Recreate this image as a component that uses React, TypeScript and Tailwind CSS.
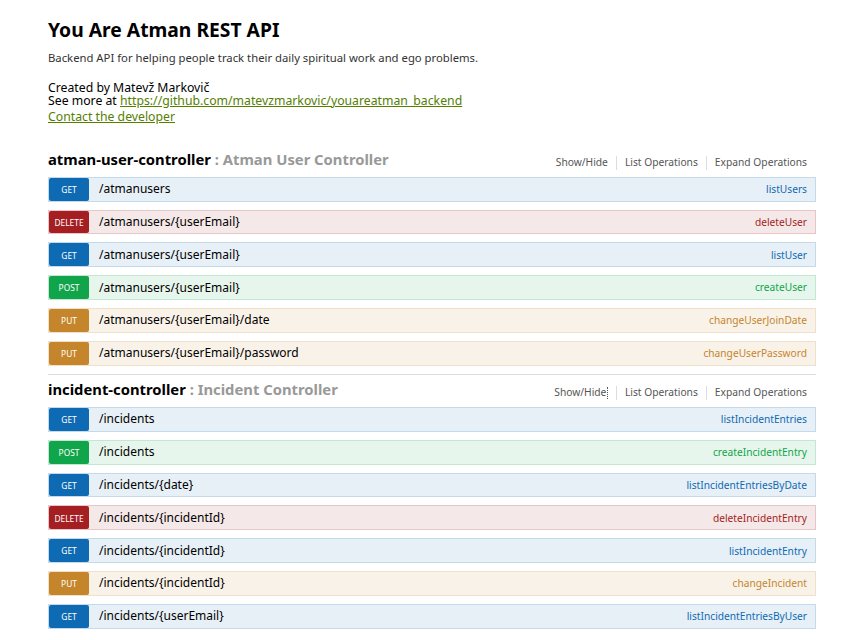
import React from "react";

type Method = "GET" | "POST" | "PUT" | "DELETE";

const styles: Record<Method, { row: string; badge: string; label: string }> = {
  GET: { row: "bg-[#e7f0f7] border-[#c3d9ec]", badge: "bg-[#0f6ab4]", label: "text-[#0f6ab4]" },
  POST: { row: "bg-[#e7f6ec] border-[#c3e8d1]", badge: "bg-[#10a54a]", label: "text-[#10a54a]" },
  PUT: { row: "bg-[#f9f2e9] border-[#f0e0ca]", badge: "bg-[#c5862b]", label: "text-[#c5862b]" },
  DELETE: { row: "bg-[#f5e8e8] border-[#e8c6c7]", badge: "bg-[#a41e22]", label: "text-[#a41e22]" },
};

type Op = { m: Method; path: string; name: string };

const userOps: Op[] = [
  { m: "GET", path: "/atmanusers", name: "listUsers" },
  { m: "DELETE", path: "/atmanusers/{userEmail}", name: "deleteUser" },
  { m: "GET", path: "/atmanusers/{userEmail}", name: "listUser" },
  { m: "POST", path: "/atmanusers/{userEmail}", name: "createUser" },
  { m: "PUT", path: "/atmanusers/{userEmail}/date", name: "changeUserJoinDate" },
  { m: "PUT", path: "/atmanusers/{userEmail}/password", name: "changeUserPassword" },
];

const incidentOps: Op[] = [
  { m: "GET", path: "/incidents", name: "listIncidentEntries" },
  { m: "POST", path: "/incidents", name: "createIncidentEntry" },
  { m: "GET", path: "/incidents/{date}", name: "listIncidentEntriesByDate" },
  { m: "DELETE", path: "/incidents/{incidentId}", name: "deleteIncidentEntry" },
  { m: "GET", path: "/incidents/{incidentId}", name: "listIncidentEntry" },
  { m: "PUT", path: "/incidents/{incidentId}", name: "changeIncident" },
  { m: "GET", path: "/incidents/{userEmail}", name: "listIncidentEntriesByUser" },
];

function Row({ op }: { op: Op }) {
  const s = styles[op.m];
  return (
    <div className={`flex items-center h-[24.8px] mb-[8px] border ${s.row}`}>
      <div
        className={`self-stretch w-[40px] shrink-0 rounded-[2px] flex items-center justify-center pt-[2px] text-white text-[8.4px] leading-none ${s.badge}`}
      >
        {op.m}
      </div>
      <div className="pl-[10px] text-[12px] leading-none text-black flex-1">{op.path}</div>
      <div className={`pr-[8px] text-[10.2px] leading-none ${s.label}`}>{op.name}</div>
    </div>
  );
}

function Section({
  name,
  desc,
  ops,
  last,
  focus,
}: {
  name: string;
  desc: string;
  ops: Op[];
  last?: boolean;
  focus?: boolean;
}) {
  return (
    <div className={last ? "" : "border-b border-[#dddddd]"}>
      <div className="flex justify-between h-[32.5px]">
        <h2 className="mt-[4.3px] text-[14.8px] leading-[20px] font-bold">
          <span className="text-black">{name}</span>
          <span className="text-[#999999]"> : {desc}</span>
        </h2>
        <ul className="flex mt-[11.3px] mr-[9px] h-[14px]">
          <li className="pr-[8px] py-[1.6px] border-r border-[#dddddd] text-[10.25px] leading-[10.8px] text-[#555555] flex items-start">
            <span>Show/Hide</span>
            {focus ? <span className="ml-[0.5px] mt-[-0.5px] h-[12px] border-r border-dotted border-[#555555]" /> : null}
          </li>
          <li className="px-[8px] py-[1.6px] border-r border-[#dddddd] text-[10.25px] leading-[10.8px] text-[#555555]">
            List Operations
          </li>
          <li className="pl-[8px] py-[1.6px] text-[10.25px] leading-[10.8px] text-[#555555]">
            Expand Operations
          </li>
        </ul>
      </div>
      {ops.map((op, i) => (
        <Row key={i} op={op} />
      ))}
    </div>
  );
}

export default function App() {
  return (
    <div className="min-h-[640px] bg-white font-['Noto_Sans',sans-serif]">
      <div className="w-[768px] mx-auto pt-[20px]">
        <h1 className="text-[19.3px] leading-[20px] font-bold text-black pb-[10px]">You Are Atman REST API</h1>
        <p className="text-[11.3px] leading-[16.8px] text-[#333333]">
          Backend API for helping people track their daily spiritual work and ego problems.
        </p>
        <div className="mt-[15.5px] text-[12.25px] leading-[12.6px] text-black">
          <div>Created by Matevž Markovič</div>
          <div>
            See more at{" "}
            <a className="text-[#547f00] underline" href="#">
              https://github.com/matevzmarkovic/youareatman_backend
            </a>
          </div>
        </div>
        <div className="mt-[2px] text-[12.25px] leading-[16.8px]">
          <a className="text-[#547f00] underline" href="#">
            Contact the developer
          </a>
        </div>
        <div className="mt-[18px]">
          <Section name="atman-user-controller" desc="Atman User Controller" ops={userOps} />
          <Section name="incident-controller" desc="Incident Controller" ops={incidentOps} last focus />
        </div>
      </div>
    </div>
  );
}
